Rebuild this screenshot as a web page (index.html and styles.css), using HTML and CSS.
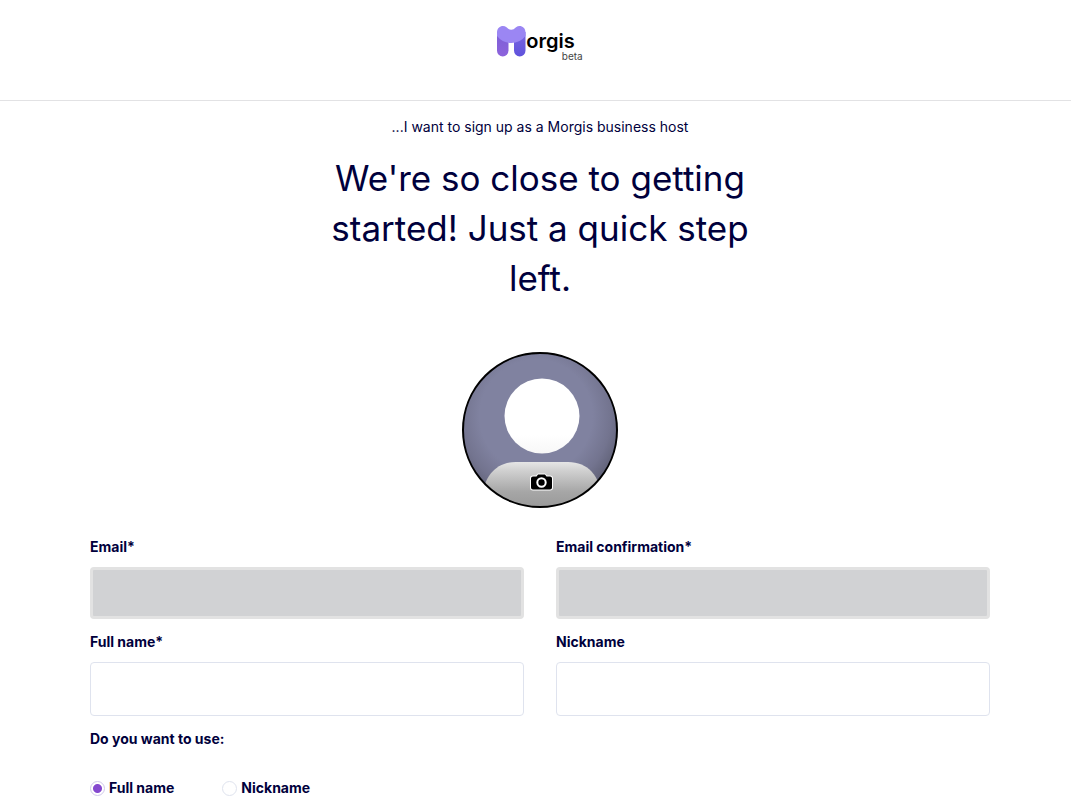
FILE: index.html
```
<!DOCTYPE html>
<html lang="en">
<head>
<meta charset="utf-8">
	<meta name="viewport" content="width=device-width, initial-scale=1">
	<title>Morgis</title>
	<link rel="stylesheet" href="styles.css">
</head>
<body>
<header class="header">
	<a class="logo" href="#">
		<svg class="logo-mark" viewBox="0 0 29 31" aria-hidden="true">
			<defs>
				<linearGradient id="legLeft" x1="0" y1="0" x2="0" y2="1">
					<stop offset="0" stop-color="#7c5fd6"/>
					<stop offset="1" stop-color="#8d63dc"/>
				</linearGradient>
				<linearGradient id="legRight" x1="0" y1="0" x2="0" y2="1">
					<stop offset="0" stop-color="#7a66e0"/>
					<stop offset="1" stop-color="#5f52dc"/>
				</linearGradient>
			</defs>
			<path d="M0 6h11.500v18.500a5.750 6 0 0 1-11.500 0z" fill="url(#legLeft)"/>
			<path d="M17 6h11.500v18.500a5.750 6 0 0 1-11.500 0z" fill="url(#legRight)"/>
			<path d="M0 6.500C0 1 5.500 -1.500 9.500 1.200Q14.250 6.500 19 1.200C23 -1.500 28.500 1 28.500 6.500V10Q23 17 14.250 17Q5.500 17 0 10z" fill="#9b86f3"/>
		</svg>
		<span class="logo-name">orgis</span>
		<span class="logo-beta">beta</span>
	</a>
</header>
<main class="page">
	<p class="intro">...I want to sign up as a Morgis business host</p>
	<h1 class="title">We're so close to getting started! Just a quick step left.</h1>
	<form class="form">
		<button class="avatar" type="button" aria-label="Upload photo">
			<svg viewBox="0 0 156 156" aria-hidden="true">
				<defs>
					<clipPath id="round"><circle cx="78" cy="78" r="77"/></clipPath>
					<linearGradient id="body" x1="0" y1="0" x2="0" y2="1">
						<stop offset="0" stop-color="#e6e6e6"/>
						<stop offset=".2" stop-color="#cfcfcf"/>
						<stop offset=".65" stop-color="#a6a6a6"/>
						<stop offset="1" stop-color="#999"/>
					</linearGradient>
					<linearGradient id="head" x1="0" y1="0" x2="0" y2="1">
						<stop offset=".75" stop-color="#fff"/>
						<stop offset="1" stop-color="#f7f7f7"/>
					</linearGradient>
					<radialGradient id="shade" gradientUnits="userSpaceOnUse" cx="74" cy="64" r="94">
						<stop offset=".6" stop-color="#8082a0"/>
						<stop offset=".8" stop-color="#73748f"/>
						<stop offset="1" stop-color="#5b5c70"/>
					</radialGradient>
				</defs>
				<g clip-path="url(#round)">
					<rect width="156" height="156" fill="url(#shade)"/>
					<circle cx="80" cy="64" r="37.500" fill="url(#head)"/>
					<path d="M20 156V146C22 124 34 110 54 110H106C126 110 138 124 140 146V156z" fill="url(#body)"/>
				</g>
				<circle cx="78" cy="78" r="77" fill="none" stroke="#000" stroke-width="2"/>
				<path d="M71 124.500h3.500l1.500-2h7l1.500 2h3.500a2 2 0 0 1 2 2v9a2 2 0 0 1-2 2h-17a2 2 0 0 1-2-2v-9a2 2 0 0 1 2-2z" fill="#000" stroke="#fff" stroke-width="2" stroke-linejoin="round" paint-order="stroke"/>
				<circle cx="79.500" cy="130.500" r="4.200" fill="#000" stroke="#fff" stroke-width="2"/>
			</svg>
		</button>
		<div class="fields">
			<div class="field">
				<label for="email">Email*</label>
				<input class="input" type="email" id="email" name="email" disabled>
			</div>
			<div class="field">
				<label for="email2">Email confirmation*</label>
				<input class="input" type="email" id="email2" name="email2" disabled>
			</div>
			<div class="field">
				<label for="fullname">Full name*</label>
				<input class="input" type="text" id="fullname" name="fullname">
			</div>
			<div class="field">
				<label for="nickname">Nickname</label>
				<input class="input" type="text" id="nickname" name="nickname">
			</div>
		</div>
		<fieldset class="choice">
			<legend>Do you want to use:</legend>
			<div class="options">
				<label class="option"><input type="radio" name="display" value="fullname" checked>Full name</label>
				<label class="option"><input type="radio" name="display" value="nickname">Nickname</label>
			</div>
		</fieldset>
	</form>
</main>
</body>
</html>
```
FILE: styles.css
```
*{box-sizing: border-box;margin: 0;padding: 0;}
body{
	font-family: Inter, "Liberation Sans", sans-serif;
	font-size: 14px;
	line-height: 20px;
	color: #00003c;
	background-color: #fff;
}
.header{
	display: flex;
	justify-content: center;
	padding: 26px 81px 39px 90px;
	border-bottom: 1px solid #e2e2e4;
}
/* logo */
.logo{
	display: grid;
	grid-template-columns: 29px auto 8px;
	grid-template-rows: 26px 9px;
	color: #000;
	text-decoration: none;
}
.logo-mark{
	grid-row: 1 / 3;
	width: 29px;
	height: 31px;
}
.logo-name{
	padding-top: 5px;
	font-size: 20px;
	font-weight: 600;
	line-height: 20px;
}
.logo-beta{
	grid-row: 2;
	grid-column: 2 / 4;
	justify-self: end;
	font-size: 10px;
	line-height: 9px;
	color: #444;
}
.page{
	padding: 16px 81px 40px 90px;
}
.intro{
	text-align: center;
}
.title{
	max-width: 434px;
	margin: 16px auto 49px;
	font-size: 35px;
	font-weight: 400;
	line-height: 50px;
	text-align: center;
}
.avatar{
	display: block;
	width: 156px;
	height: 156px;
	margin: 0 auto 29px;
	border: 0;
	border-radius: 50%;
	background: none;
	cursor: pointer;
}
.avatar svg{
	display: block;
}
/* form */
.fields{
	display: grid;
	grid-template-columns: 1fr 1fr;
	gap: 13px 32px;
}
.field{
	display: flex;
	flex-direction: column;
	gap: 10px;
}
label,legend{
	font-weight: 700;
}
.input{
	width: 100%;
	height: 54px;
	padding: 0 16px;
	border: 1px solid #dfe3ee;
	border-radius: 4px;
	background-color: #fff;
	font: inherit;
	color: inherit;
}
.input:disabled{
	height: 52px;
	border: 3px solid #e2e2e2;
	background-color: #d1d2d4;
}
.choice{
	margin-top: 13px;
	border: 0;
}
.options{
	display: flex;
	gap: 48px;
	padding-top: 29px;
}
.option{
	display: flex;
	align-items: center;
	gap: 4px;
}
.option input{
	appearance: none;
	width: 15px;
	height: 15px;
	border: 1px solid #dfe3ee;
	border-radius: 50%;
}
.option input:checked{
	border-color: #cfc8ea;
	background: radial-gradient(circle, #8549cf 4px, #fff 5px);
}
```
